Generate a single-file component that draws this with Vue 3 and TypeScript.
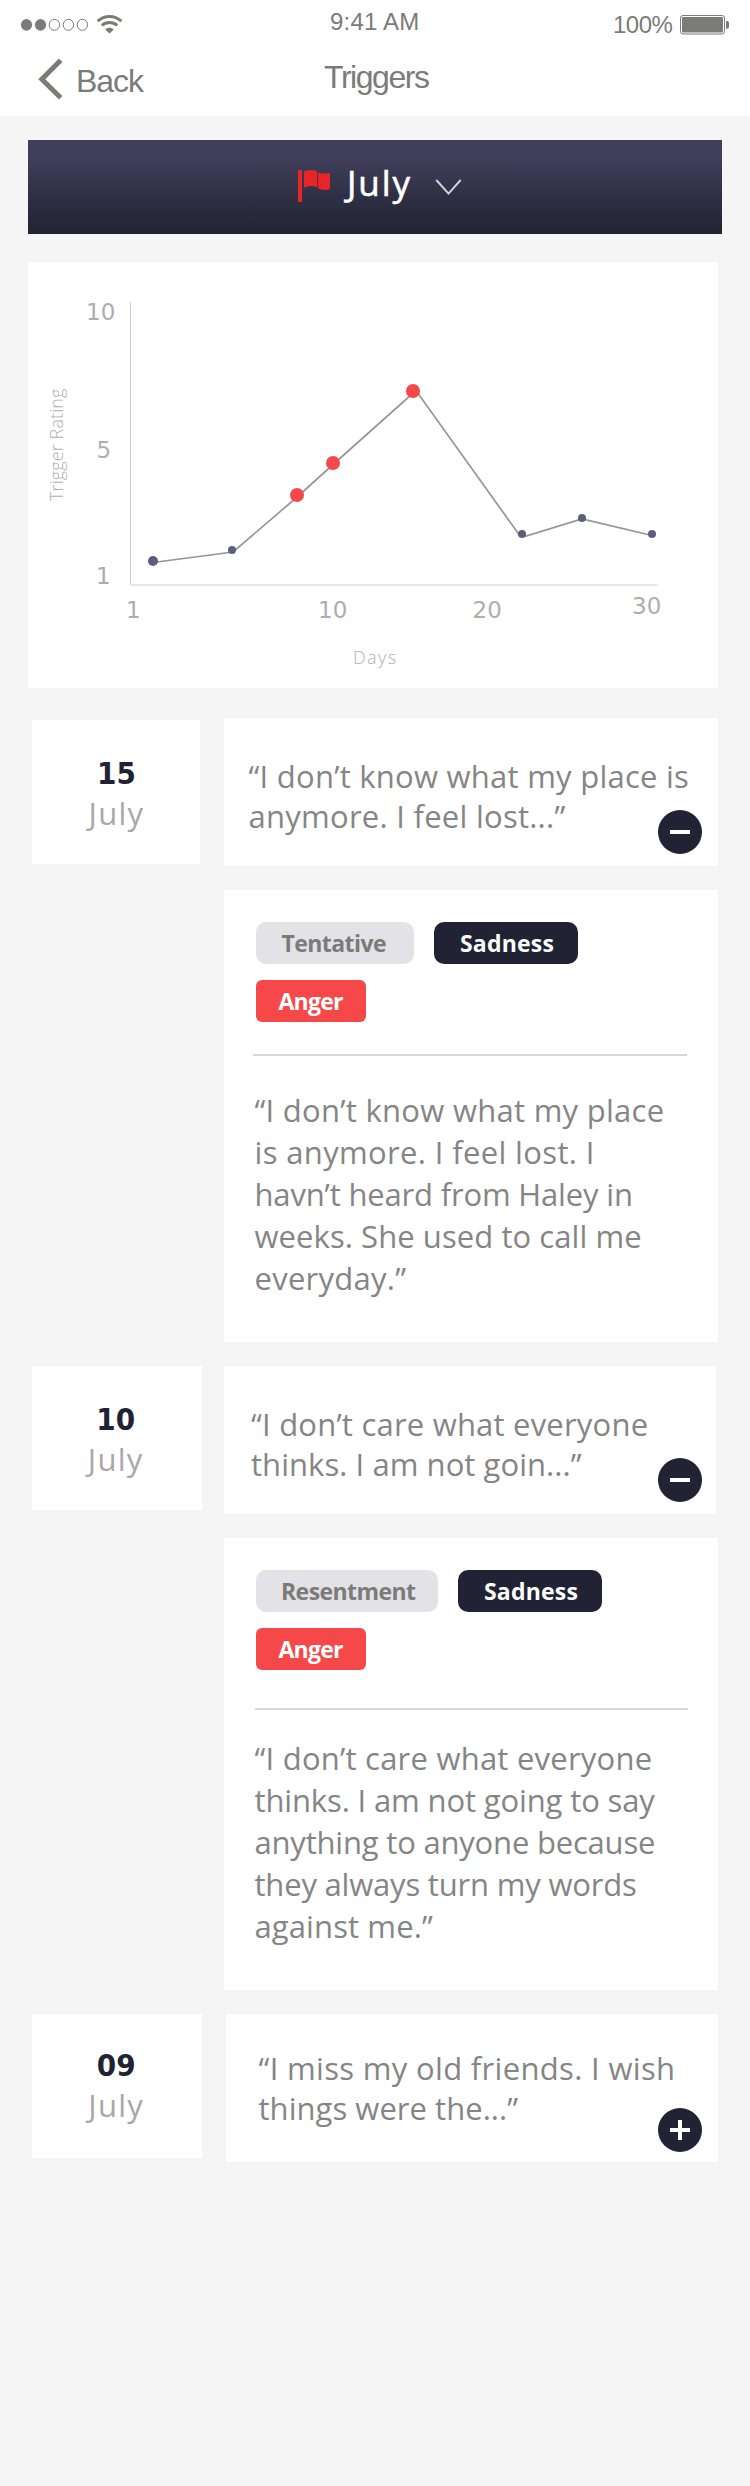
<script setup lang="ts">
interface Line {
  text: string
  spacing: number
}

interface Tag {
  label: string
  tone: 'soft' | 'dark' | 'alert'
  size: string
}

interface Entry {
  day: string
  month: string
  open: boolean
  preview: Line[]
  tags?: Tag[]
  detail?: Line[]
}

const entries: Entry[] = [
  {
    day: '15',
    month: 'July',
    open: true,
    preview: [
      { text: '“I don’t know what my place is', spacing: 0.25 },
      { text: 'anymore. I feel lost...”', spacing: 0.26 },
    ],
    tags: [
      { label: 'Tentative', tone: 'soft', size: 'tentative' },
      { label: 'Sadness', tone: 'dark', size: 'sadness' },
      { label: 'Anger', tone: 'alert', size: 'anger' },
    ],
    detail: [
      { text: '“I don’t know what my place', spacing: 0.276 },
      { text: 'is anymore. I feel lost. I', spacing: 0.353 },
      { text: 'havn’t heard from Haley in', spacing: -0.17 },
      { text: 'weeks. She used to call me', spacing: 0.07 },
      { text: 'everyday.”', spacing: 0.26 },
    ],
  },
  {
    day: '10',
    month: 'July',
    open: true,
    preview: [
      { text: '“I don’t care what everyone', spacing: 0.21 },
      { text: 'thinks. I am not goin...”', spacing: 0.056 },
    ],
    tags: [
      { label: 'Resentment', tone: 'soft', size: 'resentment' },
      { label: 'Sadness', tone: 'dark', size: 'sadness' },
      { label: 'Anger', tone: 'alert', size: 'anger' },
    ],
    detail: [
      { text: '“I don’t care what everyone', spacing: 0.23 },
      { text: 'thinks. I am not going to say', spacing: -0.134 },
      { text: 'anything to anyone because', spacing: -0.197 },
      { text: 'they always turn my words', spacing: -0.195 },
      { text: 'against me.”', spacing: 0.105 },
    ],
  },
  {
    day: '09',
    month: 'July',
    open: false,
    preview: [
      { text: '“I miss my old friends. I wish', spacing: 0.327 },
      { text: 'things were the...”', spacing: 0.04 },
    ],
  },
]

const points = [
  { x: 125, y: 299, r: 5, high: false },
  { x: 204, y: 288, r: 4, high: false },
  { x: 269, y: 233, r: 7, high: true },
  { x: 305, y: 201, r: 7, high: true },
  { x: 385, y: 129, r: 7, high: true },
  { x: 494, y: 272, r: 4, high: false },
  { x: 554, y: 256, r: 4, high: false },
  { x: 624, y: 272, r: 4, high: false },
]
</script>

<template>
  <div class="screen">
    <header class="top">
      <div class="status">
        <svg class="signal" width="130" height="48" viewBox="0 0 130 48">
          <g fill="#7b7b78">
            <ellipse cx="26.5" cy="24.8" rx="5.6" ry="5.9" />
            <ellipse cx="40.5" cy="24.8" rx="5.6" ry="5.9" />
          </g>
          <g fill="none" stroke="#7b7b78">
            <ellipse cx="54.4" cy="24.8" rx="5.2" ry="5.5" />
            <ellipse cx="68.4" cy="24.8" rx="5.2" ry="5.5" />
            <ellipse cx="82.4" cy="24.8" rx="5.2" ry="5.5" />
          </g>
          <g fill="none" stroke="#7b7b78" stroke-width="3">
            <path d="M97.6 21.2C104.5 14.8 114.5 14.8 121.4 21.2" />
            <path d="M101.8 25.4C106.2 21.5 112.8 21.5 117.2 25.4" />
          </g>
          <path d="M105.2 29.4C107.6 27.2 111.4 27.2 113.8 29.4L109.5 33.6Z" fill="#7b7b78" />
        </svg>
        <span class="time">9:41 AM</span>
        <span class="charge">100%</span>
        <svg class="battery" width="52" height="48" viewBox="0 0 52 48">
          <rect x="1.5" y="15.5" width="44" height="18.5" rx="2.5" fill="none" stroke="#7b7b78" />
          <rect x="3" y="17" width="41" height="15.5" rx="1" fill="#7b7b78" />
          <path d="M47 21h1.300q1.7 0 1.7 1.8v4.2q0 1.8-1.7 1.8H47z" fill="#7b7b78" />
        </svg>
      </div>
      <nav class="nav">
        <svg class="chevron" width="76" height="68" viewBox="0 0 76 68">
          <path d="M60.7 12.2L41.8 31.2L60.7 49.8" fill="none" stroke="#7b7b78" stroke-width="5" />
        </svg>
        <span class="back">Back</span>
        <h1 class="title">Triggers</h1>
      </nav>
    </header>

    <div class="month-bar">
      <svg class="flag" width="32" height="32" viewBox="0 0 32 32" fill="#e62528">
        <rect width="4" height="32" />
        <path d="M6 1.200Q12.5-1.2 19.2 1.2V17.4Q12.5 14.6 6 17.7Z" />
        <path d="M20 2.4Q26 4.6 32 2.8V19.2Q26 21 20 18.6Z" />
      </svg>
      <span class="month-name">July</span>
      <svg class="caret" width="27" height="18" viewBox="0 0 27 18">
        <path d="M1.3 2L13.5 15.6L25.7 2" fill="none" stroke="#d6d6d2" stroke-width="1.9" />
      </svg>
    </div>

    <section class="chart">
      <svg width="690" height="426" viewBox="0 0 690 426">
        <rect x="102" y="40" width="1" height="283" fill="#d2d2d2" />
        <rect x="102" y="322" width="527.5" height="2" fill="#e6e6e6" />
        <polyline
          points="125,300.5 205,290 268,236 304,203.5 384,132 389,130 491,272.5 498,274 554,257 624,273.5"
          fill="none"
          stroke="#969696"
          stroke-width="1.7"
        />
        <circle
          v-for="(p, i) in points"
          :key="i"
          :cx="p.x"
          :cy="p.y"
          :r="p.r"
          :fill="p.high ? '#f74849' : '#5e5d7e'"
        />
        <g class="axis">
          <text x="58" y="58">10</text>
          <text x="68.5" y="196">5</text>
          <text x="68" y="322">1</text>
          <text x="98" y="356">1</text>
          <text x="290" y="356">10</text>
          <text x="444.5" y="356">20</text>
          <text x="604" y="352">30</text>
        </g>
        <g class="caption">
          <text class="days" x="325" y="402">Days</text>
          <text transform="translate(35 239) rotate(-90)">Trigger Rating</text>
        </g>
      </svg>
    </section>

    <main class="log">
      <article v-for="e in entries" :key="e.day" class="entry" :class="'entry-' + e.day">
        <div class="date">
          <span class="day">{{ e.day }}</span>
          <span class="month">{{ e.month }}</span>
        </div>
        <div class="body">
          <div class="preview">
            <p class="quote">
              <span
                v-for="(l, i) in e.preview"
                :key="i"
                class="line"
                :style="{ letterSpacing: l.spacing + 'px' }"
                >{{ l.text }}</span
              >
            </p>
            <svg class="toggle" width="44" height="44" viewBox="0 0 44 44">
              <circle cx="22" cy="22" r="22" fill="#212334" />
              <rect x="12" y="20" width="20" height="4" fill="#fff" />
              <rect v-if="!e.open" x="20" y="12" width="4" height="20" fill="#fff" />
            </svg>
          </div>
          <div v-if="e.detail" class="detail">
            <div class="tags">
              <span v-for="t in e.tags" :key="t.label" class="tag" :class="[t.tone, t.size]">{{
                t.label
              }}</span>
            </div>
            <div class="rule"></div>
            <p class="story">
              <span
                v-for="(l, i) in e.detail"
                :key="i"
                class="line"
                :style="{ letterSpacing: l.spacing + 'px' }"
                >{{ l.text }}</span
              >
            </p>
          </div>
        </div>
      </article>
    </main>
  </div>
</template>

<style>
body {
  margin: 0;
  background: #f5f5f5;
}
</style>

<style scoped>
.screen {
  box-sizing: border-box;
  width: 750px;
  min-height: 2486px;
  background: #f5f5f5;
  font-family: 'Open Sans', 'Noto Sans', sans-serif;
  color: #858585;
}
svg {
  display: block;
  flex: none;
}
.top {
  height: 116px;
  background: #fff;
  font-family: 'Liberation Sans', Arial, sans-serif;
  color: #7b7b78;
}
.status {
  display: flex;
  align-items: flex-start;
  height: 48px;
  font-size: 24px;
}
.time {
  width: 283px;
  margin-left: 200px;
  line-height: 43px;
  letter-spacing: 0.18px;
}
.charge {
  width: 66px;
  line-height: 49px;
  letter-spacing: -0.5px;
}
.nav {
  display: flex;
  align-items: flex-start;
  height: 68px;
  font-size: 32px;
}
.back {
  width: 248px;
  line-height: 66px;
  letter-spacing: -1.05px;
}
.title {
  margin: 0;
  font-size: 32px;
  font-weight: 400;
  line-height: 58px;
  letter-spacing: -1.45px;
}
.month-bar {
  display: flex;
  align-items: flex-start;
  box-sizing: border-box;
  width: 694px;
  height: 94px;
  margin: 24px 0 0 28px;
  padding-left: 270px;
  background: linear-gradient(#403e5a 0%, #403e5a 20%, #2e2f43 62%, #212334 100%);
}
.flag {
  margin-top: 30px;
}
.month-name {
  width: 87.5px;
  margin-left: 17px;
  font-size: 35px;
  line-height: 85px;
  letter-spacing: 1.9px;
  color: #fff;
  -webkit-text-stroke: 0.6px #fff;
}
.caret {
  margin-top: 38px;
}
.chart {
  width: 690px;
  height: 426px;
  margin: 28px 0 0 28px;
  background: #fff;
}
.axis {
  font-family: 'DejaVu Sans', sans-serif;
  font-size: 23px;
  fill: #aeaeae;
}
.caption {
  font-size: 18px;
  font-weight: 300;
  letter-spacing: 0.1px;
  fill: #b0b0b0;
}
.days {
  letter-spacing: 1.4px;
}
.log {
  display: flex;
  flex-direction: column;
  gap: 24px;
  margin: 30px 0 0 32px;
}
.entry {
  display: flex;
  align-items: flex-start;
}
.date {
  box-sizing: border-box;
  flex: none;
  width: 169.5px;
  height: 144px;
  padding: 32px 2px 0 0;
  background: #fff;
  text-align: center;
}
.day,
.month {
  display: block;
  font-size: 31px;
}
.day {
  height: 40px;
  font-family: 'DejaVu Sans Condensed', 'DejaVu Sans', sans-serif;
  font-weight: 700;
  font-stretch: condensed;
  line-height: 42px;
  color: #212334;
}
.month {
  line-height: 42px;
  letter-spacing: 1.28px;
  color: #a8a8a8;
}
.body {
  display: flex;
  flex-direction: column;
  gap: 24px;
  width: 494px;
  margin-left: 22.5px;
}
.preview {
  position: relative;
  box-sizing: border-box;
  width: 492px;
  height: 148px;
  padding: 38px 0 0 27px;
  background: #fff;
}
.quote,
.story {
  margin: 0;
  font-size: 31px;
  line-height: 40px;
}
.line {
  display: block;
  white-space: nowrap;
}
.toggle {
  position: absolute;
  right: 14px;
  bottom: 12px;
}
.detail {
  box-sizing: border-box;
  height: 452px;
  padding: 32px 30px 0 32px;
  background: #fff;
}
.tags {
  display: flex;
  flex-wrap: wrap;
  gap: 16px 20px;
}
.tag {
  box-sizing: border-box;
  height: 42px;
  border-radius: 10px;
  font-size: 23px;
  font-weight: 700;
  line-height: 42px;
}
.tentative {
  width: 158px;
  padding-left: 25.5px;
  letter-spacing: -0.56px;
}
.resentment {
  width: 182px;
  padding-left: 25px;
  letter-spacing: -0.57px;
}
.sadness {
  width: 144px;
  padding-left: 26px;
  letter-spacing: 0.2px;
}
.anger {
  width: 110px;
  padding-left: 22.5px;
  letter-spacing: -0.76px;
}
.soft {
  background: #e3e2e7;
  color: #7b7b78;
}
.dark {
  background: #212334;
  color: #fff;
}
.alert {
  border-radius: 6px;
  background: #f74849;
  color: #fff;
}
.rule {
  width: 433px;
  height: 2px;
  margin: 38px 0 27px -1px;
  background: #d8d8d8;
}
.story {
  margin-left: -1.5px;
  line-height: 42px;
}
.entry-15 .date {
  width: 168px;
  margin-top: 2px;
  padding: 32px 0 0 1px;
}
.entry-15 .body {
  margin-left: 24px;
}
.entry-15 .preview {
  width: 494px;
  padding-left: 24.5px;
}
.entry-15 .toggle {
  right: 16px;
}
.entry-15 .rule {
  width: 434px;
  margin: 32px 0 33px -3px;
}
.entry-09 .date {
  padding: 30px 1px 0 0;
}
.entry-09 .body {
  margin-left: 24.5px;
}
.entry-09 .preview {
  padding: 34px 0 0 32.5px;
}
.entry-09 .toggle {
  right: 16px;
  bottom: 10px;
}
</style>
